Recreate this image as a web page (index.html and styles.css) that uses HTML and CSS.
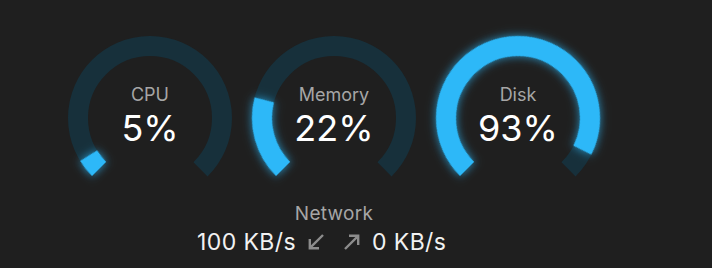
FILE: index.html
```html
<!DOCTYPE html>
<html>
<head>
<meta charset="utf-8">
<link rel="stylesheet" href="styles.css">
</head>
<body>
<main class="panel">
  <section class="gauges">
    <div class="gauge">
      <svg class="dial" viewBox="0 0 164 164" width="164" height="164">
        <circle class="track" cx="82" cy="82" r="72" stroke-dasharray="339.29 1000" transform="rotate(135 82 82)"/>
        <circle class="fill" cx="82" cy="82" r="72" style="stroke-dasharray: 16.96 1000" transform="rotate(135 82 82)"/>
      </svg>
      <div class="readout">
        <span class="label">CPU</span>
        <span class="value">5%</span>
      </div>
    </div>
    <div class="gauge">
      <svg class="dial" viewBox="0 0 164 164" width="164" height="164">
        <circle class="track" cx="82" cy="82" r="72" stroke-dasharray="339.29 1000" transform="rotate(135 82 82)"/>
        <circle class="fill" cx="82" cy="82" r="72" style="stroke-dasharray: 74.64 1000" transform="rotate(135 82 82)"/>
      </svg>
      <div class="readout">
        <span class="label">Memory</span>
        <span class="value">22%</span>
      </div>
    </div>
    <div class="gauge">
      <svg class="dial" viewBox="0 0 164 164" width="164" height="164">
        <circle class="track" cx="82" cy="82" r="72" stroke-dasharray="339.29 1000" transform="rotate(135 82 82)"/>
        <circle class="fill" cx="82" cy="82" r="72" style="stroke-dasharray: 315.54 1000" transform="rotate(135 82 82)"/>
      </svg>
      <div class="readout">
        <span class="label">Disk</span>
        <span class="value">93%</span>
      </div>
    </div>
  </section>
  <section class="network">
    <div class="net-label">Network</div>
    <div class="net-row">
      <span class="rate down">100 KB/s</span>
      <svg class="arrow" viewBox="0 0 16 16" width="16" height="16"><path d="M15 1 L1.8 14.2 M1.8 5 V14.2 H11"/></svg>
      <svg class="arrow up" viewBox="0 0 16 16" width="16" height="16"><path d="M1 15 L14.2 1.8 M5 1.8 H14.2 V11"/></svg>
      <span class="rate">0 KB/s</span>
    </div>
  </section>
</main>
</body>
</html>
```
FILE: styles.css
```css
html, body {
  margin: 0;
  padding: 0;
  background: #1f1f1f;
}
body {
  width: 712px;
  height: 268px;
  overflow: hidden;
  font-family: Inter, "Liberation Sans", sans-serif;
}
.panel {
  width: 668px;
  padding-top: 36px;
  display: flex;
  flex-direction: column;
  align-items: center;
}
.gauges {
  display: flex;
  gap: 20px;
}
.gauge {
  position: relative;
  width: 164px;
  height: 164px;
}
.dial {
  display: block;
  overflow: visible;
}
.track {
  fill: none;
  stroke: #17303b;
  stroke-width: 20;
}
.fill {
  fill: none;
  stroke: #2db8f8;
  stroke-width: 20;
  filter: drop-shadow(0 0 5px rgba(45, 184, 248, 0.75));
}
.readout {
  position: absolute;
  inset: 0;
  display: flex;
  flex-direction: column;
  align-items: center;
  padding-top: 48px;
}
.label {
  font-size: 18px;
  line-height: 22px;
  color: #a6a6a6;
}
.value {
  margin-top: 2px;
  font-size: 36px;
  line-height: 40px;
  color: #ffffff;
}
.network {
  align-self: stretch;
  margin-top: 3px;
  display: flex;
  flex-direction: column;
  align-items: center;
}
.net-label {
  font-size: 19px;
  line-height: 22px;
  letter-spacing: 0.3px;
  color: #a6a6a6;
}
.net-row {
  align-self: stretch;
  display: grid;
  grid-template-columns: 1fr auto auto 1fr;
  align-items: center;
  margin-top: 4px;
}
.rate {
  font-size: 23px;
  line-height: 26px;
  letter-spacing: 0.4px;
  color: #f2f2f2;
}
.rate.down {
  justify-self: end;
}
.arrow {
  display: block;
  width: 16px;
  height: 16px;
  fill: none;
  stroke: #8c8c8c;
  stroke-width: 2.4;
  margin-left: 12px;
}
.arrow.up {
  margin-left: 20px;
  margin-right: 12px;
}
```
